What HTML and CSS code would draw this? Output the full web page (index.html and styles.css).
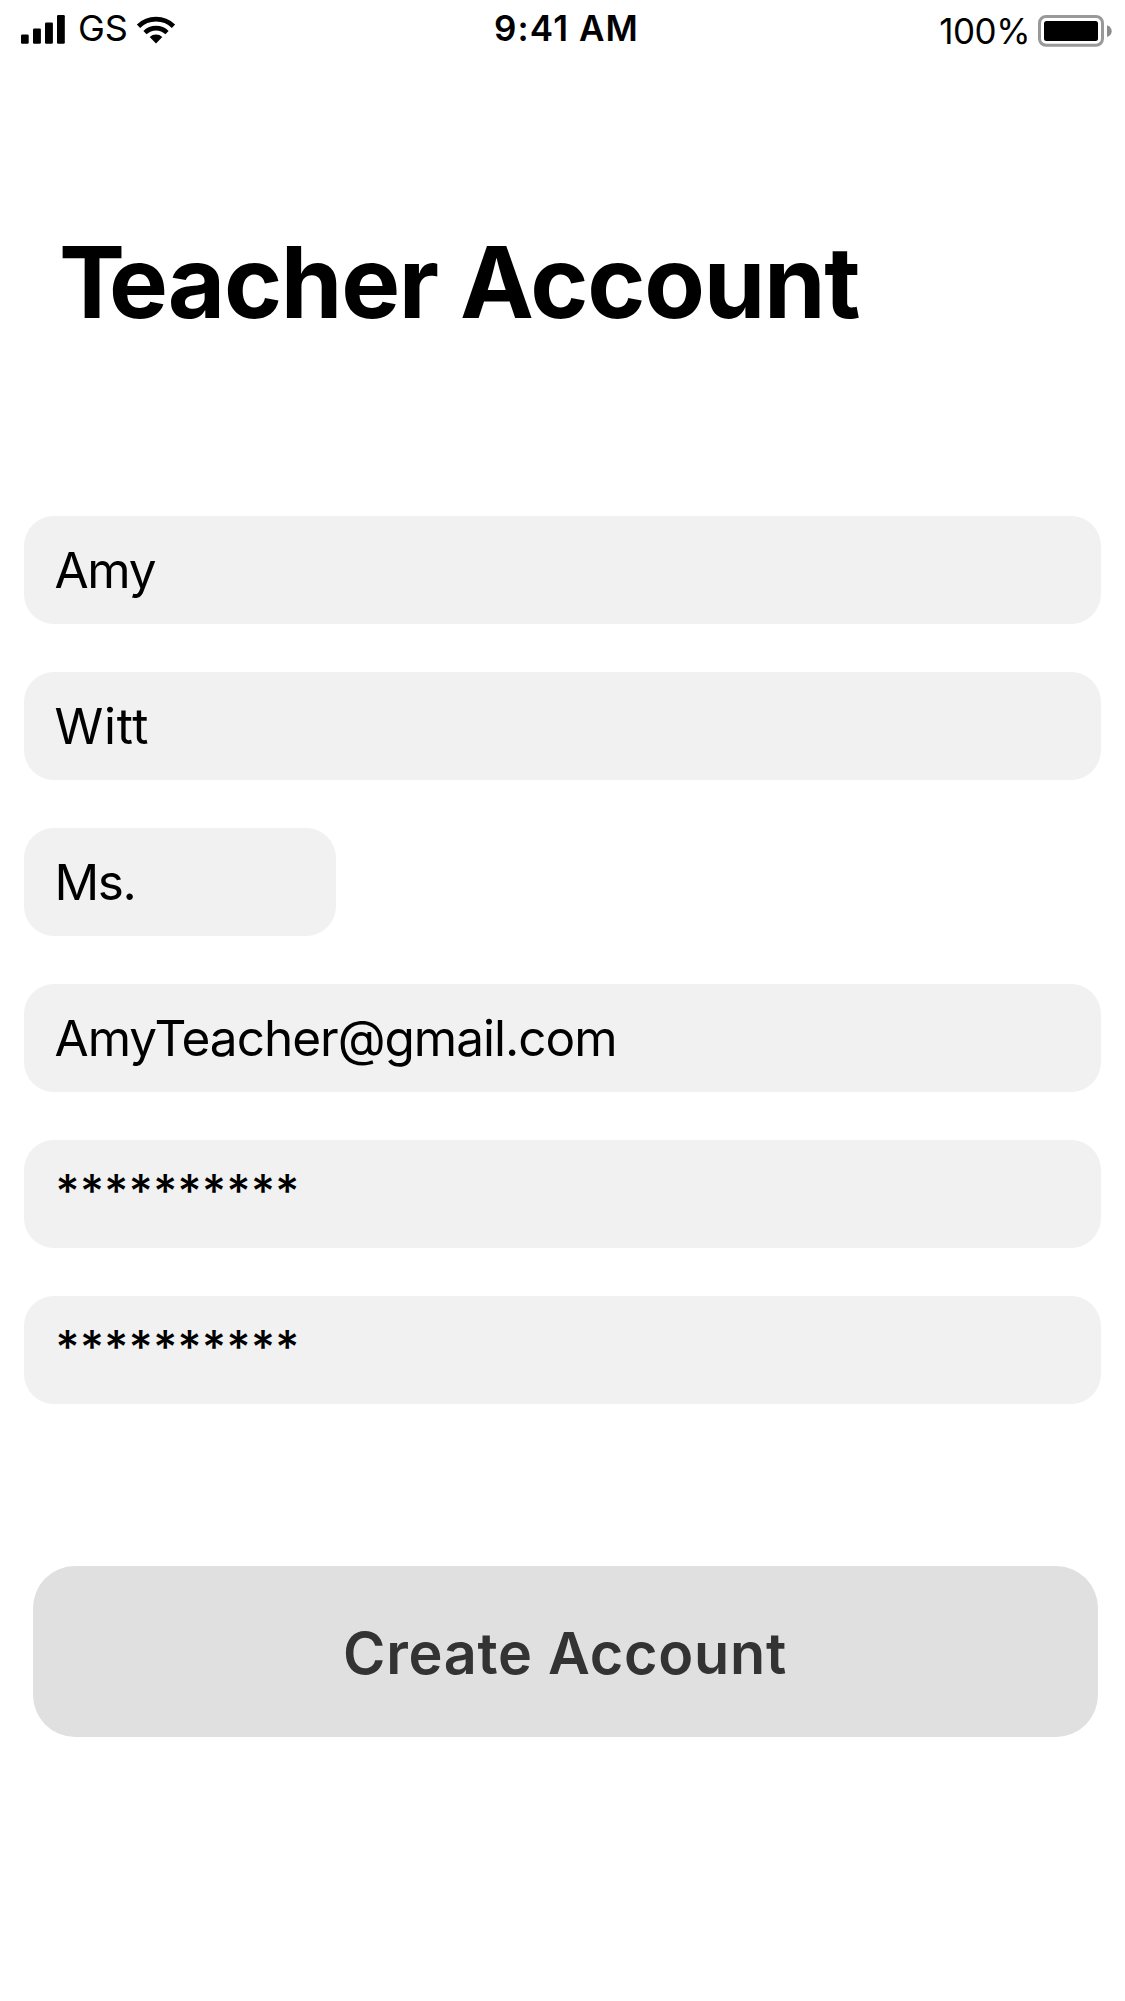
FILE: index.html
```html
<!DOCTYPE html>
<html lang="en">
<head>
<meta charset="utf-8">
<title>Teacher Account</title>
<link rel="stylesheet" href="styles.css">
</head>
<body>
<header class="status">
  <div class="status-left">
    <svg class="signal" width="44" height="29" viewBox="0 0 44 29">
      <rect x="0" y="19.5" width="7.7" height="9.2" rx="1.2"/>
      <rect x="12" y="13.5" width="7.9" height="15.2" rx="1.2"/>
      <rect x="24" y="7.5" width="7.9" height="21.2" rx="1.2"/>
      <rect x="36" y="0" width="7.8" height="28.7" rx="1.2"/>
    </svg>
    <span class="carrier">GS</span>
    <svg class="wifi" width="40" height="29" viewBox="136 15 40 29">
      <path d="M138.5 26.2A25.2 25.2 0 0 1 173.5 26.2" fill="none" stroke="#000" stroke-width="4.7"/>
      <path d="M145 32.6A15.8 15.8 0 0 1 167 32.6" fill="none" stroke="#000" stroke-width="4.6"/>
      <path d="M149.7 37.1A9.2 9.2 0 0 1 162.3 37.1L156 43.4Z"/>
    </svg>
  </div>
  <span class="time">9:41 AM</span>
  <div class="status-right">
    <span class="percent">100%</span>
    <svg class="battery" width="74" height="32" viewBox="0 0 74 32">
      <rect x="1.5" y="1.5" width="63" height="28.8" rx="6.5" fill="none" stroke="#999" stroke-width="3"/>
      <rect x="6" y="6" width="54" height="20" rx="2.5"/>
      <path d="M69 10.3Q73.7 12.2 73.7 16.2T69 22Z" fill="#8c8c8c"/>
    </svg>
  </div>
</header>
<main>
  <h1 class="title"><span class="title-initial">T</span>eacher Account</h1>
  <form class="form">
    <div class="field field-first">Amy</div>
    <div class="field field-last">Witt</div>
    <div class="field field-short">Ms.</div>
    <div class="field">AmyTeacher@gmail.com</div>
    <div class="field field-secret">**********</div>
    <div class="field field-secret">**********</div>
    <button class="submit" type="button">Create Account</button>
  </form>
</main>
</body>
</html>
```
FILE: styles.css
```css
* { box-sizing: border-box; }

body {
  margin: 0;
  min-height: 2001px;
  background: #fff;
  color: #000;
  font-family: Inter, "Liberation Sans", sans-serif;
}

.status {
  display: grid;
  grid-template-columns: 1fr auto 1fr;
  height: 60px;
  padding: 0 13px 0 21px;
  font-size: 35px;
  line-height: 56px;
  white-space: nowrap;
}

.status svg { display: block; flex: none; margin-top: 15px; }

.status-left,
.status-right {
  display: flex;
  align-items: flex-start;
}

.status-right { justify-content: flex-end; }
.carrier { width: 57px; margin-left: 13px; font-size: 36px; letter-spacing: 0; }
.wifi { margin-left: 1px; }
.time { font-weight: 600; letter-spacing: 1.1px; }
.percent { padding-top: 3px; margin-right: 8px; letter-spacing: -0.5px; }

.title {
  margin: 162px 0 0 59px;
  font-size: 99px;
  font-weight: 700;
  letter-spacing: -1.3px;
  line-height: 120px;
  white-space: nowrap;
}

.title-initial { letter-spacing: -16px; }

.form {
  display: flex;
  flex-direction: column;
  gap: 48px;
  padding: 174px 24px 0;
}

.field {
  height: 108px;
  padding-left: 30.5px;
  border-radius: 30px;
  background: #f1f1f1;
  font-size: 49.5px;
  letter-spacing: -1px;
  line-height: 108px;
  white-space: nowrap;
}

.field-first { letter-spacing: -1.3px; }
.field-last { letter-spacing: 0.7px; }
.field-short { width: 312px; letter-spacing: -1.4px; }

.field-secret {
  padding-left: 31.5px;
  font-size: 46px;
  font-weight: 500;
  letter-spacing: 0.48px;
  line-height: 102px;
}

.submit {
  height: 171px;
  margin: 114px 3px 0 9px;
  padding: 3px 1px 0 0;
  border: 0;
  border-radius: 42px;
  background: #e0e0e0;
  color: #333;
  font-family: inherit;
  font-size: 57.5px;
  font-weight: 600;
  letter-spacing: 0.75px;
}
```
